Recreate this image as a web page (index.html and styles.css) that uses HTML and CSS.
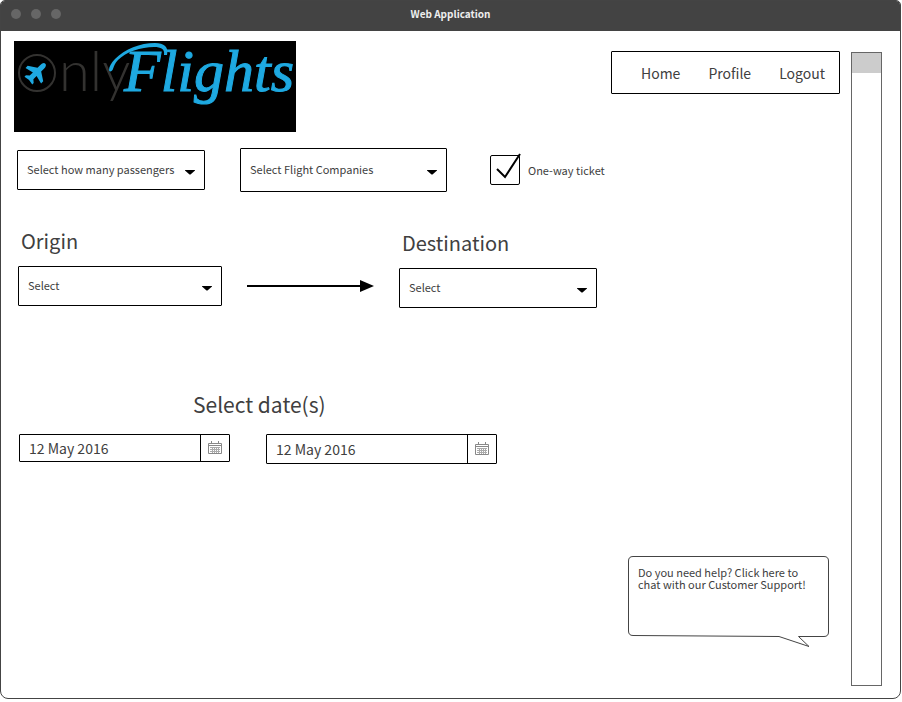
FILE: index.html
```html
<!DOCTYPE html>
<html lang="en">
<head>
<meta charset="utf-8">
<title>OnlyFlights</title>
<link rel="stylesheet" href="styles.css">
</head>
<body>
<div class="window">
  <header class="titlebar">
    <div class="dots"><span class="dot"></span><span class="dot"></span><span class="dot"></span></div>
    <span class="title">Web Application</span>
  </header>
  <div class="viewport">
    <main class="page">
      <div class="masthead">
        <svg class="logo" viewBox="0 0 282 91" role="img" aria-label="OnlyFlights">
          <rect width="282" height="91" fill="#000"/>
          <circle cx="23" cy="32" r="18" fill="none" stroke="#333230" stroke-width="2"/>
          <g transform="translate(22.500 31.500) rotate(45)" fill="#1ea9e1">
            <path d="M0-12.500C1.800-12.500 2.600-10.500 2.600-8V-4L11 1.500V4.500L2.600 2.500V7L5.500 9.500V11.500L0 10.500L-5.500 11.500V9.500L-2.600 7V2.500L-11 4.500V1.500L-2.600-4V-8C-2.600-10.500-1.800-12.500 0-12.500Z"/>
          </g>
          <text class="logo-only" x="45" y="50">nly</text>
          <text class="logo-flights" x="110" y="50">Flights</text>
          <path d="M95 29C95 26 97 22 101 18C111 8 126 2 141 2C150 2 155 6 153 14L150 14C151 8 147 6 140 6C127 6 112 11 104 19C101 22 100 25 99 28C98 31 95 31 95 29Z" fill="#1ea9e1"/>
        </svg>
        <nav class="nav">
          <a href="#">Home</a>
          <a href="#">Profile</a>
          <a href="#">Logout</a>
        </nav>
      </div>

      <div class="options">
        <div class="select">
          <select aria-label="Passengers"><option>Select how many passengers</option></select>
          <svg class="caret" viewBox="0 0 10 5"><path d="M0 0H10V.5L5.500 4.500H4.500L0 .5Z"/></svg>
        </div>
        <div class="select tall">
          <select aria-label="Flight companies"><option>Select Flight Companies</option></select>
          <svg class="caret" viewBox="0 0 10 5"><path d="M0 0H10V.5L5.500 4.500H4.500L0 .5Z"/></svg>
        </div>
        <div class="check">
          <span class="check-box">
            <input type="checkbox" id="oneway" checked>
            <svg class="tick" viewBox="0 0 32 32"><path d="M7 16L15 24L30 1" fill="none" stroke="#000" stroke-width="2"/></svg>
          </span>
          <label for="oneway">One-way ticket</label>
        </div>
      </div>

      <div class="route">
        <div class="place">
          <label class="heading" for="origin">Origin</label>
          <div class="select">
            <select id="origin"><option>Select</option></select>
            <svg class="caret" viewBox="0 0 10 5"><path d="M0 0H10V.5L5.500 4.500H4.500L0 .5Z"/></svg>
          </div>
        </div>
        <div class="arrow">
          <span class="arrow-line"></span>
          <svg class="arrow-head" viewBox="0 0 14 12"><path d="M0 0L14 6L0 12Z"/></svg>
        </div>
        <div class="place lower">
          <label class="heading" for="destination">Destination</label>
          <div class="select">
            <select id="destination"><option>Select</option></select>
            <svg class="caret" viewBox="0 0 10 5"><path d="M0 0H10V.5L5.500 4.500H4.500L0 .5Z"/></svg>
          </div>
        </div>
      </div>

      <section class="dates">
        <h2 class="heading">Select date(s)</h2>
        <div class="date-row">
          <div class="date">
            <input type="text" value="12 May 2016" aria-label="Departure date">
            <button type="button" aria-label="Choose departure date">
              <svg class="calendar" viewBox="0 0 14 14"><path d="M.5 2.500H13.500V12.500H.5ZM0 4.500H14M3.500 0V3M10.500 0V3"/><path class="grid" d="M2 6.500H12M2 8.500H12M2 10.500H12M4.500 6V12M6.500 6V12M8.500 6V12M10.500 6V12"/></svg>
            </button>
          </div>
          <div class="date tall">
            <input type="text" value="12 May 2016" aria-label="Return date">
            <button type="button" aria-label="Choose return date">
              <svg class="calendar" viewBox="0 0 14 14"><path d="M.5 2.500H13.500V12.500H.5ZM0 4.500H14M3.500 0V3M10.500 0V3"/><path class="grid" d="M2 6.500H12M2 8.500H12M2 10.500H12M4.500 6V12M6.500 6V12M8.500 6V12M10.500 6V12"/></svg>
            </button>
          </div>
        </div>
      </section>

      <a class="bubble" href="#">
        <svg class="bubble-shape" viewBox="0 0 201 91"><path d="M5 .5H196Q200.500 .5 200.500 5V76Q200.500 80.500 196 80.500H170.500L181 90.500L151 80.500L5 79.500Q.5 79.500 .5 75V5Q.5 .5 5 .5Z"/></svg>
        <span class="bubble-text">Do you need help? Click here to chat with our Customer Support!</span>
      </a>
    </main>
    <div class="scrollbar"><div class="thumb"></div></div>
  </div>
</div>
</body>
</html>
```
FILE: styles.css
```css
* { box-sizing: border-box; }

body {
  margin: 0;
  background: #fff;
  color: #404040;
  font-family: "Noto Sans CJK SC", "Noto Sans", sans-serif;
  font-size: 11px;
  line-height: 16px;
}

a { color: inherit; text-decoration: none; }

.window {
  display: flex;
  flex-direction: column;
  min-height: calc(100vh - 3px);
  margin-right: 1px;
  border: 1px solid #444;
  border-radius: 5px 5px 8px 8px;
}

.titlebar {
  display: grid;
  grid-template-columns: 1fr auto 1fr;
  align-items: center;
  height: 30px;
  padding: 0 10px 5px;
  border-radius: 4px 4px 0 0;
  background: #434343;
}

.dots { display: flex; gap: 10px; }
.dot { width: 10px; height: 10px; border-radius: 50%; background: #666; }
.title { color: #eee; font-size: 10px; font-weight: bold; }

.viewport {
  flex: 1;
  display: flex;
  gap: 11px;
  padding: 10px 18px 12px 13px;
}

.page { flex: 1; display: flex; flex-direction: column; }

.masthead { display: flex; justify-content: space-between; align-items: flex-start; }
.logo { display: block; width: 282px; height: 91px; overflow: visible; }
.logo-only { font-family: Lato, sans-serif; font-weight: 300; font-size: 56px; fill: #333230; }
.logo-flights {
  font-family: "Liberation Serif", serif;
  font-style: italic;
  font-size: 60px;
  fill: #1ea9e1;
  stroke: #1ea9e1;
  stroke-width: 1px;
}

.nav {
  display: flex;
  align-items: center;
  gap: 28px;
  height: 43px;
  margin-top: 10px;
  padding: 0 14px 0 29px;
  border: 1px solid #000;
  border-radius: 1px;
  font-size: 14px;
}

.options {
  display: grid;
  grid-template-columns: 188fr 207fr 358fr;
  gap: 35px;
  align-items: center;
  margin-top: 16px;
  padding-left: 3px;
}

.select { position: relative; height: 40px; }
.select.tall { height: 44px; }
.select select {
  appearance: none;
  width: 100%;
  height: 100%;
  padding: 0 24px 2px 9px;
  border: 1px solid #000;
  border-radius: 1px;
  background: #fff;
  color: inherit;
  font: inherit;
}
.caret { position: absolute; right: 10px; top: 50%; width: 10px; height: 5px; fill: #000; }

.check { display: flex; align-items: center; gap: 8px; padding-left: 8px; }
.check-box { position: relative; display: flex; }
.check input {
  appearance: none;
  width: 30px;
  height: 30px;
  margin: 0;
  border: 1px solid #000;
  border-radius: 2px;
}
.tick { position: absolute; left: 0; bottom: 0; width: 32px; height: 32px; pointer-events: none; }

.heading { margin: 0; font-size: 20px; font-weight: normal; line-height: 28px; }

.route {
  display: grid;
  grid-template-columns: 204fr 127fr 198fr 218fr;
  gap: 25px;
  align-items: start;
  margin-top: 35px;
  padding-left: 4px;
}
.place { display: flex; flex-direction: column; gap: 11px; }
.place.lower { padding-top: 2px; }
.place .heading { padding-left: 3px; }
.arrow { display: flex; align-items: center; height: 40px; margin-top: 39px; }
.arrow-line { flex: 1; height: 2px; background: #000; }
.arrow-head { width: 14px; height: 12px; }

.dates { margin-top: 82px; padding-left: 5px; }
.dates .heading { padding-left: 174px; font-size: 21px; }
.date-row {
  display: grid;
  grid-template-columns: 211fr 231fr 307fr;
  gap: 36px;
  align-items: start;
  margin-top: 16px;
}
.date { display: flex; height: 28px; border: 1px solid #000; border-radius: 1px; }
.date.tall { height: 30px; }
.date input {
  flex: 1;
  min-width: 0;
  padding: 0 9px;
  border: 0;
  background: none;
  color: inherit;
  font: inherit;
  font-size: 14px;
  line-height: 24px;
}
.date button {
  display: grid;
  place-items: center;
  width: 29px;
  padding: 0;
  border: 0;
  border-left: 1px solid #000;
  background: none;
}
.calendar { width: 14px; height: 14px; fill: none; stroke: #888; stroke-width: 1px; }
.calendar .grid { stroke: #aaa; }

.bubble {
  display: grid;
  width: 201px;
  margin: auto 11px 39px auto;
  line-height: 12px;
}
.bubble-shape, .bubble-text { grid-area: 1 / 1; }
.bubble-shape { width: 100%; fill: #fff; stroke: #444; }
.bubble-text { padding: 10px 20px 0 10px; }

.scrollbar { width: 31px; margin-top: 11px; border: 1px solid #666; }
.thumb { height: 20px; background: #ccc; }
```
